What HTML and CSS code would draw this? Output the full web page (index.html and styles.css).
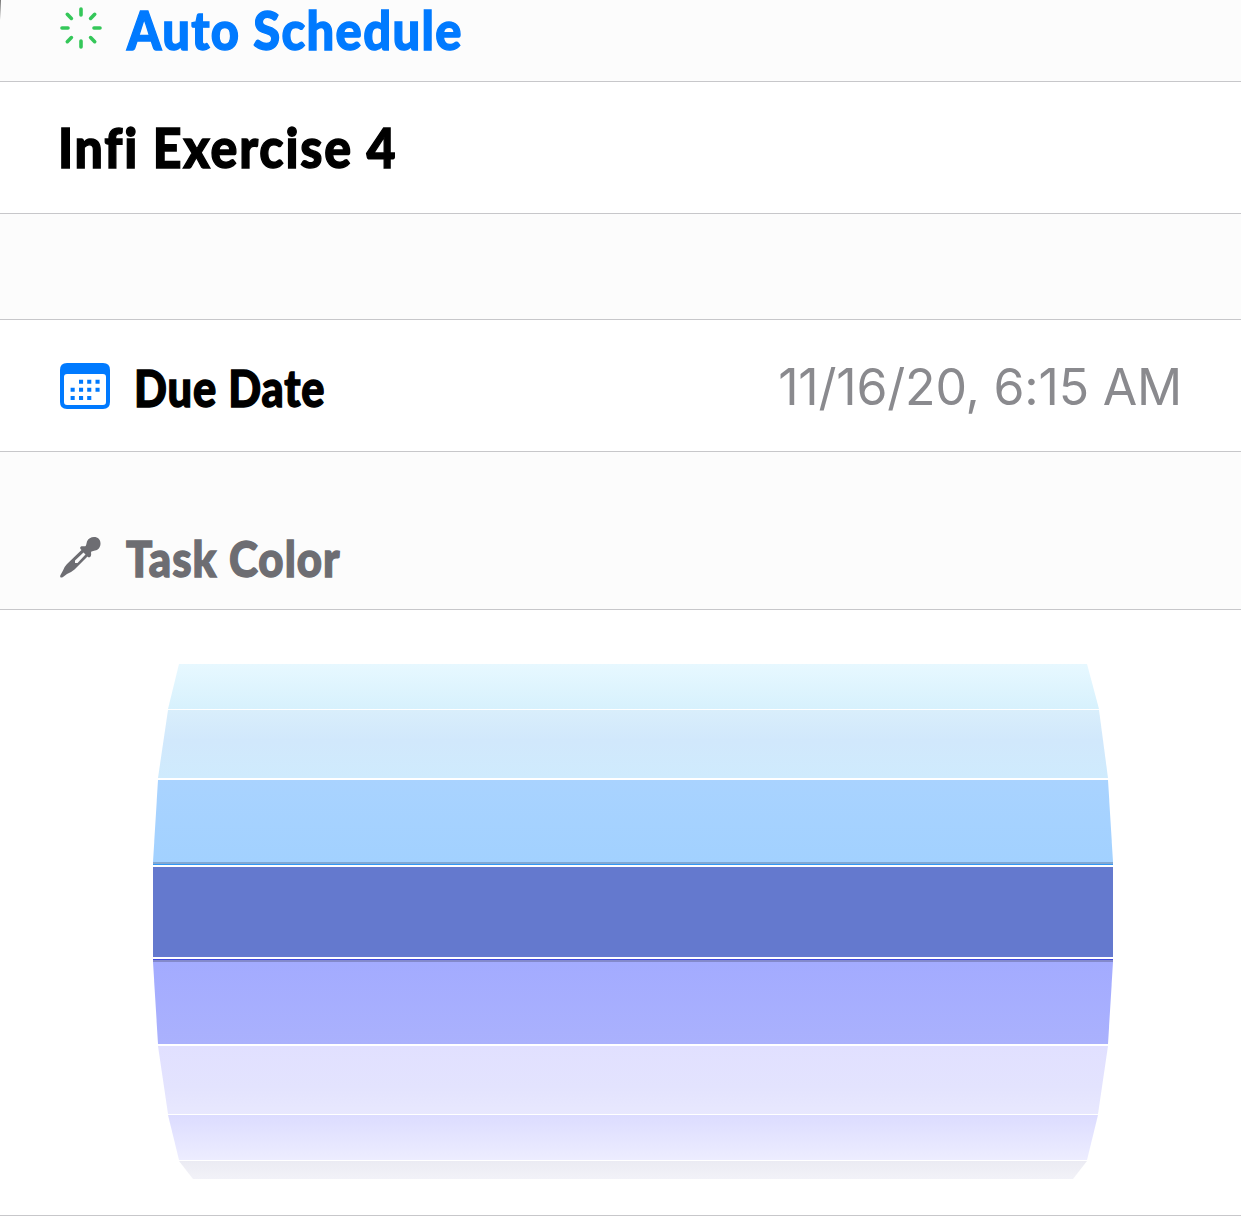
FILE: index.html
```html
<!DOCTYPE html>
<html lang="en">
<head>
<meta charset="utf-8">
<title>Task</title>
<link rel="stylesheet" href="styles.css">
</head>
<body>
<main class="form">
  <header class="section auto">
    <svg class="icon rays" viewBox="0 0 42 42" width="42" height="42">
      <path d="M21 2v6M21 34v6M2 21h6M34 21h6M7.3 7.3l4.1 4.1M30.6 30.6l4.1 4.1M7.3 34.7l4.1-4.1M30.6 11.4l4.1-4.1"/>
    </svg>
    <span class="marker auto-label">Auto Schedule</span>
  </header>
  <section class="row title-row"><span class="marker title-label">Infi Exercise 4</span></section>
  <div class="section spacer"></div>
  <section class="row due-row">
    <svg class="icon calendar" viewBox="0 0 50 46" width="50" height="46">
      <path fill="#007aff" fill-rule="evenodd" d="M7 0H43Q50 0 50 7V39Q50 46 43 46H7Q0 46 0 39V7Q0 0 7 0ZM7 11Q4 11 4 14V39Q4 42 7 42H43Q46 42 46 39V14Q46 11 43 11Z"/>
      <path class="dots" d="M21 18.7h.1M29.2 18.7h.1M37.5 18.7h.1M12.6 26.8h.1M21 26.8h.1M29.2 26.8h.1M37.5 26.8h.1M12.6 35h.1M21 35h.1M29.2 35h.1"/>
    </svg>
    <span class="marker due-label">Due Date</span>
    <time class="date">11/16/20, 6:15 AM</time>
  </section>
  <header class="section color-head">
    <svg class="icon" viewBox="0 0 42 42" width="42" height="42">
      <path fill="#6d6d72" fill-rule="evenodd" d="M27 5.500C28 2.500 31 1 34 1C38 1 40.500 3.500 40.500 7.500C40.500 11 38.500 14 35 14.500L31.500 15.500C30.500 16.500 31.500 18 31 19.500C30.500 21.500 28.500 22 27.500 20.500L14.500 33.500Q11 36.500 7 38L3 41Q1 42 .3 41Q-.2 40 .8 38.500L3 34.500Q4.500 30.500 7 28L21.500 14C19.500 12.500 20 10.800 21.500 10.300C23 9.800 25 11 26 9.500ZM23.500 16.500L15 24.500V27H17.500L25.500 18.500Z"/>
    </svg>
    <span class="marker color-label">Task Color</span>
  </header>
  <section class="picker">
    <div class="wheel">
      <div class="band b1"></div>
      <div class="band b2"></div>
      <div class="band b3"></div>
      <div class="edge edge-top"></div>
      <div class="band selected"></div>
      <div class="edge edge-bottom"></div>
      <div class="band b4"></div>
      <div class="band b5"></div>
      <div class="band b6"></div>
      <div class="band b7"></div>
    </div>
  </section>
</main>
</body>
</html>
```
FILE: styles.css
```css
* { box-sizing: border-box; }
body { margin: 0; background: #fff; }
.form { width: 1241px; height: 1216px; overflow: hidden; }
.section, .row { display: flex; align-items: flex-start; padding: 0 60px; border-bottom: 1px solid #c7c7ca; }
.section { background: #fcfcfc; }
.row { background: #fff; }
.icon { flex: none; }
.marker {
  font-family: "Marker Felt", Lato, sans-serif;
  font-weight: 900;
  font-size: 56px;
  line-height: 60px;
  white-space: nowrap;
  font-variant-ligatures: none;
  -webkit-text-stroke: 1.4px currentColor;
  transform-origin: left center;
}
.auto { height: 82px; background: linear-gradient(#777, #fcfcfc) 0 0 / 1px 20px no-repeat #fcfcfc; }
.rays { margin-top: 7px; fill: none; stroke: #34c759; stroke-width: 3.6; stroke-linecap: round; }
.auto-label { margin: 0 0 0 25px; font-size: 54px; letter-spacing: 1.5px; color: #007aff; transform: scaleX(.905); }
.title-row { height: 132px; padding-top: 35px; }
.title-label { margin-left: -2px; letter-spacing: 2px; color: #000; transform: scaleX(.895); }
.spacer { height: 106px; }
.due-row { height: 132px; padding-top: 43px; }
.dots { fill: none; stroke: #007aff; stroke-width: 4; stroke-linecap: square; }
.due-label { margin: -5px 0 0 24px; font-size: 51px; letter-spacing: 1px; transform: scaleX(.85); }
.date { margin: -6px -1px 0 auto; font: 400 50px/60px Inter, sans-serif; letter-spacing: -.2px; color: #8a8a8e; white-space: nowrap; }
.color-head { height: 158px; padding-top: 85px; }
.color-head .icon { margin-top: -1px; }
.color-label { margin: -9px 0 0 24px; font-size: 50px; letter-spacing: 1.2px; color: #6d6d72; transform: scaleX(.875); }
.picker { height: 606px; padding: 54px 128px 0 153px; border-bottom: 1px solid #c7c7ca; }
.wheel { width: 960px; }
.b1 { height: 45px; margin-bottom: 1px; background: linear-gradient(#e7f8ff, #d7f1fd); clip-path: polygon(26px 0, 934px 0, 946px 100%, 15px 100%); }
.b2 { height: 68px; margin-bottom: 2px; background: linear-gradient(#d9eefb, #d1e8fc 45%, #cfebfd); clip-path: polygon(15px 0, 946px 0, 955px 100%, 5px 100%); }
.b3 { height: 82px; background: linear-gradient(#a9d3ff, #a2d1ff); clip-path: polygon(5px 0, 955px 0, 960px 100%, 0 100%); }
.edge { height: 3px; }
.edge-top { margin-bottom: 2px; background: linear-gradient(#83a8d2 2px, #3298f5 2px); }
.selected { height: 90px; margin-bottom: 2px; background: #6479ce; }
.edge-bottom { background: linear-gradient(#4149dc 1px, #8389cb 1px); }
.b4 { height: 82px; margin-bottom: 2px; background: linear-gradient(#a3abff, #aab1fd); clip-path: polygon(0 0, 960px 0, 955px 100%, 5px 100%); }
.b5 { height: 68px; margin-bottom: 1px; background: linear-gradient(#e1e0ff, #e3e3fe 60%, #e8e8fe); clip-path: polygon(5px 0, 955px 0, 945px 100%, 15px 100%); }
.b6 { height: 45px; margin-bottom: 1px; background: linear-gradient(#dcdcff, #ededff); clip-path: polygon(15px 0, 945px 0, 934px 100%, 26px 100%); }
.b7 { height: 18px; background: linear-gradient(#ebebf3, #f2f2f8); clip-path: polygon(26px 0, 934px 0, 920px 100%, 40px 100%); }
```
